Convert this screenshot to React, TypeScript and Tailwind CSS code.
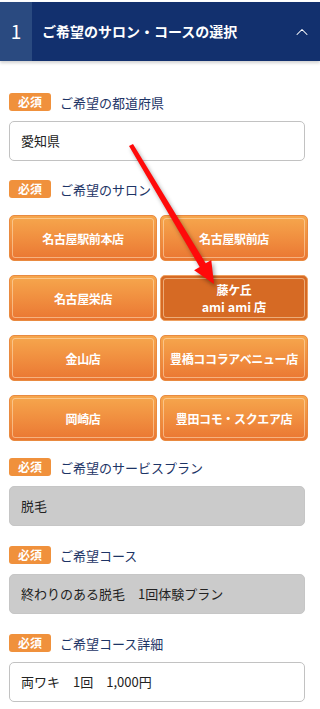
import { ChevronUp } from "lucide-react";

const salons = [
  { name: "名古屋駅前本店" },
  { name: "名古屋駅前店" },
  { name: "名古屋栄店" },
  { name: "藤ケ丘", sub: "ami ami 店", selected: true },
  { name: "金山店" },
  { name: "豊橋ココラアベニュー店" },
  { name: "岡崎店" },
  { name: "豊田コモ・スクエア店" },
];

const Label = ({ text, className = "" }: { text: string; className?: string }) => (
  <div className={`flex items-center gap-[9px] ${className}`}>
    <span className="flex h-[18px] w-[42px] items-center justify-center rounded-[3px] bg-[#f0913c] text-[12px] font-bold leading-none text-white">
      必須
    </span>
    <span className="text-[13px] leading-none text-[#1d3466]">{text}</span>
  </div>
);

const Field = ({
  value,
  gray,
  className = "",
}: {
  value: string;
  gray?: boolean;
  className?: string;
}) => (
  <div
    className={`mr-[3px] flex h-[40px] items-center rounded-[5px] border px-[11px] text-[13px] text-[#222] ${
      gray ? "border-[#c6c6c6] bg-[#cbcbcb]" : "border-[#c2c2c2] bg-white"
    } ${className}`}
  >
    {value}
  </div>
);

export default function App() {
  return (
    <div className="relative min-h-screen bg-white pt-[2px] font-['Noto_Sans_CJK_JP','Noto_Sans',sans-serif]">
      <div className="flex h-[59px] items-stretch bg-[#12306e] shadow-[0_2px_3px_rgba(0,0,0,0.18)]">
        <div className="flex w-[32px] items-center justify-center bg-[#2a4a80] text-[19px] text-white">
          1
        </div>
        <div className="flex flex-1 items-center pl-[10px] text-[14px] font-bold text-white">
          ご希望のサロン・コースの選択
        </div>
        <div className="flex items-center pr-[8px]">
          <ChevronUp className="h-[20px] w-[20px] text-white" strokeWidth={1.25} />
        </div>
      </div>

      <div className="w-[308px] pl-[9px]">
        <Label text="ご希望の都道府県" className="mt-[32px]" />
        <Field value="愛知県" className="mt-[10px]" />

        <Label text="ご希望のサロン" className="mt-[19px]" />
        <div className="mt-[17px] grid grid-cols-2 gap-x-[3px] gap-y-[14px]">
          {salons.map((s) => (
            <button
              key={s.name}
              className={`h-[46px] rounded-[5px] border p-[2px] ${
                s.selected
                  ? "border-[#eea060] bg-[#d66a24]"
                  : "border-[#e98a40] bg-gradient-to-b from-[#f6a74d] to-[#ea7632]"
              }`}
            >
              <span className="flex h-full flex-col items-center justify-center whitespace-nowrap rounded-[3px] border border-[rgba(255,225,190,0.55)] text-[12px] font-bold leading-[17px] tracking-[-0.03em] text-white">
                <span>{s.name}</span>
                {s.sub && <span className="text-[12.5px] tracking-normal">{s.sub}</span>}
              </span>
            </button>
          ))}
        </div>

        <Label text="ご希望のサービスプラン" className="mt-[17px]" />
        <Field value="脱毛" gray className="mt-[10px]" />

        <Label text="ご希望コース" className="mt-[20px]" />
        <Field value="終わりのある脱毛　1回体験プラン" gray className="mt-[10px]" />

        <Label text="ご希望コース詳細" className="mt-[20px]" />
        <Field value="両ワキ　1回　1,000円" className="mt-[10px]" />
      </div>

      <svg
        className="pointer-events-none absolute left-0 top-0 drop-shadow-[2px_3px_2px_rgba(0,0,0,0.35)]"
        width="320"
        height="709"
        viewBox="0 0 320 709"
      >
        <polygon
          points="133,144 205.7,263.3 211.3,260 214,284 194.1,270.2 199.7,266.9 129,146"
          fill="#ff0a0a"
        />
      </svg>
    </div>
  );
}
